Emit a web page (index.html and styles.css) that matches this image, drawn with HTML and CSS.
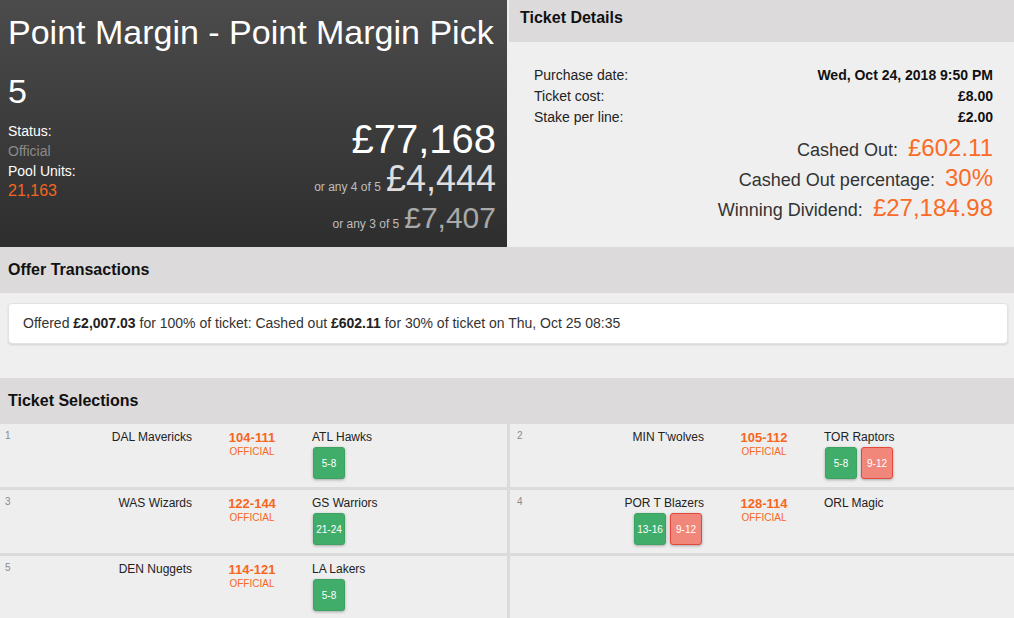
FILE: index.html
```html
<!DOCTYPE html>
<html>
<head>
<meta charset="utf-8">
<link rel="stylesheet" href="styles.css">
</head>
<body>
<div class="top">
  <section class="hero">
    <h1 class="hero-title">Point Margin - Point Margin Pick 5</h1>
    <div class="hero-row">
      <div class="status">
        <div class="st-label">Status:</div>
        <div class="st-value">Official</div>
        <div class="st-label">Pool Units:</div>
        <div class="st-units">21,163</div>
      </div>
      <div class="prizes">
        <div class="prize p1">£77,168</div>
        <div class="prize p2"><span class="any">or any 4 of 5</span>£4,444</div>
        <div class="prize p3"><span class="any">or any 3 of 5</span>£7,407</div>
      </div>
    </div>
  </section>
  <section class="details">
    <div class="details-head">Ticket Details</div>
    <div class="details-body">
      <div class="drow"><span>Purchase date:</span><b>Wed, Oct 24, 2018 9:50 PM</b></div>
      <div class="drow"><span>Ticket cost:</span><b>£8.00</b></div>
      <div class="drow"><span>Stake per line:</span><b>£2.00</b></div>
      <div class="big first"><span class="big-label">Cashed Out:</span><span class="big-value">£602.11</span></div>
      <div class="big"><span class="big-label">Cashed Out percentage:</span><span class="big-value">30%</span></div>
      <div class="big"><span class="big-label">Winning Dividend:</span><span class="big-value">£27,184.98</span></div>
    </div>
  </section>
</div>

<div class="sec-head">Offer Transactions</div>
<div class="offer-body">
  <div class="offer-card">Offered <b>£2,007.03</b> for 100% of ticket: Cashed out <b>£602.11</b> for 30% of ticket on Thu, Oct 25 08:35</div>
</div>

<div class="sec-head">Ticket Selections</div>
<div class="sel-grid">
  <div class="cell">
    <div class="idx">1</div>
    <div class="home"><div class="team">DAL Mavericks</div></div>
    <div class="score"><div class="sc">104-111</div><div class="off">OFFICIAL</div></div>
    <div class="away"><div class="team">ATL Hawks</div><div class="badges"><span class="badge win">5-8</span></div></div>
  </div>
  <div class="cell">
    <div class="idx">2</div>
    <div class="home"><div class="team">MIN T'wolves</div></div>
    <div class="score"><div class="sc">105-112</div><div class="off">OFFICIAL</div></div>
    <div class="away"><div class="team">TOR Raptors</div><div class="badges"><span class="badge win">5-8</span><span class="badge lose">9-12</span></div></div>
  </div>
  <div class="cell">
    <div class="idx">3</div>
    <div class="home"><div class="team">WAS Wizards</div></div>
    <div class="score"><div class="sc">122-144</div><div class="off">OFFICIAL</div></div>
    <div class="away"><div class="team">GS Warriors</div><div class="badges"><span class="badge win">21-24</span></div></div>
  </div>
  <div class="cell">
    <div class="idx">4</div>
    <div class="home"><div class="team">POR T Blazers</div><div class="badges"><span class="badge win">13-16</span><span class="badge lose">9-12</span></div></div>
    <div class="score"><div class="sc">128-114</div><div class="off">OFFICIAL</div></div>
    <div class="away"><div class="team">ORL Magic</div></div>
  </div>
  <div class="cell">
    <div class="idx">5</div>
    <div class="home"><div class="team">DEN Nuggets</div></div>
    <div class="score"><div class="sc">114-121</div><div class="off">OFFICIAL</div></div>
    <div class="away"><div class="team">LA Lakers</div><div class="badges"><span class="badge win">5-8</span></div></div>
  </div>
  <div class="cell empty"></div>
</div>
</body>
</html>
```

FILE: styles.css
```css
html, body {
  margin: 0;
  padding: 0;
}
body {
  background: #efefef;
  font-family: "Liberation Sans", Arial, sans-serif;
  color: #222;
  overflow: hidden;
}

.top {
  display: flex;
  gap: 2px;
}

.hero {
  width: 507px;
  box-sizing: border-box;
  padding: 3px 11px 12px 8px;
  background: linear-gradient(#4b4b4b, #2e2e2e);
  color: #fff;
}
.hero-title {
  margin: 0;
  font-size: 34px;
  font-weight: normal;
  line-height: 59px;
}
.hero-row {
  display: flex;
  justify-content: space-between;
}
.status {
  font-size: 14px;
  line-height: 20px;
}
.st-label { color: #fff; }
.st-value { color: #8a8a8a; }
.st-units { color: #f26522; font-size: 16px; }

.prizes {
  text-align: right;
}
.prize .any {
  font-size: 12px;
  line-height: 1;
  margin-right: 5px;
  color: #bdbdbd;
}
.p1 { font-size: 40px; line-height: 36px; color: #fff; }
.p2 { font-size: 36px; line-height: 43px; color: #dedede; }
.p3 { font-size: 30px; line-height: 35px; color: #a9a9a9; }

.details {
  flex: 1;
  display: flex;
  flex-direction: column;
}
.details-head {
  height: 42px;
  box-sizing: border-box;
  padding: 8px 11px 0;
  background: #dcdadb;
  font-size: 16px;
  font-weight: bold;
  line-height: 20px;
  color: #111;
}
.details-body {
  flex: 1;
  padding: 23px 21px 0 25px;
}
.drow {
  display: flex;
  justify-content: space-between;
  font-size: 14px;
  line-height: 21px;
  color: #222;
}
.drow b { color: #111; }
.big {
  display: flex;
  justify-content: flex-end;
  align-items: baseline;
  font-size: 24px;
  line-height: 30px;
}
.big.first { margin-top: 5px; }
.big-label {
  font-size: 18px;
  line-height: 20px;
  color: #333;
}
.big-value {
  margin-left: 10px;
  color: #fb6b26;
}

.sec-head {
  height: 46px;
  box-sizing: border-box;
  padding-left: 8px;
  display: flex;
  align-items: center;
  background: #dcdadb;
  font-size: 16px;
  font-weight: bold;
  line-height: 20px;
  color: #111;
}

.offer-body {
  padding: 10px 6px 34px 8px;
}
.offer-card {
  background: #fff;
  border: 1px solid #e2e2e2;
  border-radius: 4px;
  box-shadow: 0 1px 2px rgba(0, 0, 0, 0.12);
  padding: 10px 14px;
  font-size: 14px;
  line-height: 19px;
  color: #333;
}
.offer-card b { color: #222; }

.sel-grid {
  display: grid;
  grid-template-columns: 507px 1fr;
  grid-auto-rows: 63px;
  gap: 3px;
  background: #dcdadb;
}
.cell {
  background: #eeeeee;
  display: grid;
  grid-template-columns: 20px 167px 120px 1fr;
  align-items: start;
  padding: 6px 0 0 5px;
  box-sizing: border-box;
}
.cell:nth-child(even) {
  padding-left: 7px;
}
.idx {
  font-size: 10px;
  line-height: 12px;
  color: #8a8a8a;
}
.team {
  font-size: 12px;
  line-height: 15px;
  color: #222;
}
.home {
  text-align: right;
}
.home .badges {
  justify-content: flex-end;
  padding-right: 2px;
}
.away .badges {
  padding-left: 1px;
}
.score {
  text-align: center;
}
.sc {
  font-size: 13px;
  font-weight: bold;
  line-height: 16px;
  color: #f7661d;
}
.off {
  font-size: 10px;
  line-height: 12px;
  color: #f7661d;
}
.badges {
  display: flex;
  gap: 4px;
  margin-top: 2px;
}
.badge {
  width: 32px;
  height: 32px;
  box-sizing: border-box;
  border-radius: 3px;
  display: flex;
  align-items: center;
  justify-content: center;
  font-size: 10px;
  color: #fff;
  box-shadow: 0 1px 3px rgba(0, 0, 0, 0.3);
}
.badge.win {
  background: #41ad6a;
  border: 1px solid #3ba262;
}
.badge.lose {
  background: #f0877a;
  border: 1px solid #e4483a;
}
```
